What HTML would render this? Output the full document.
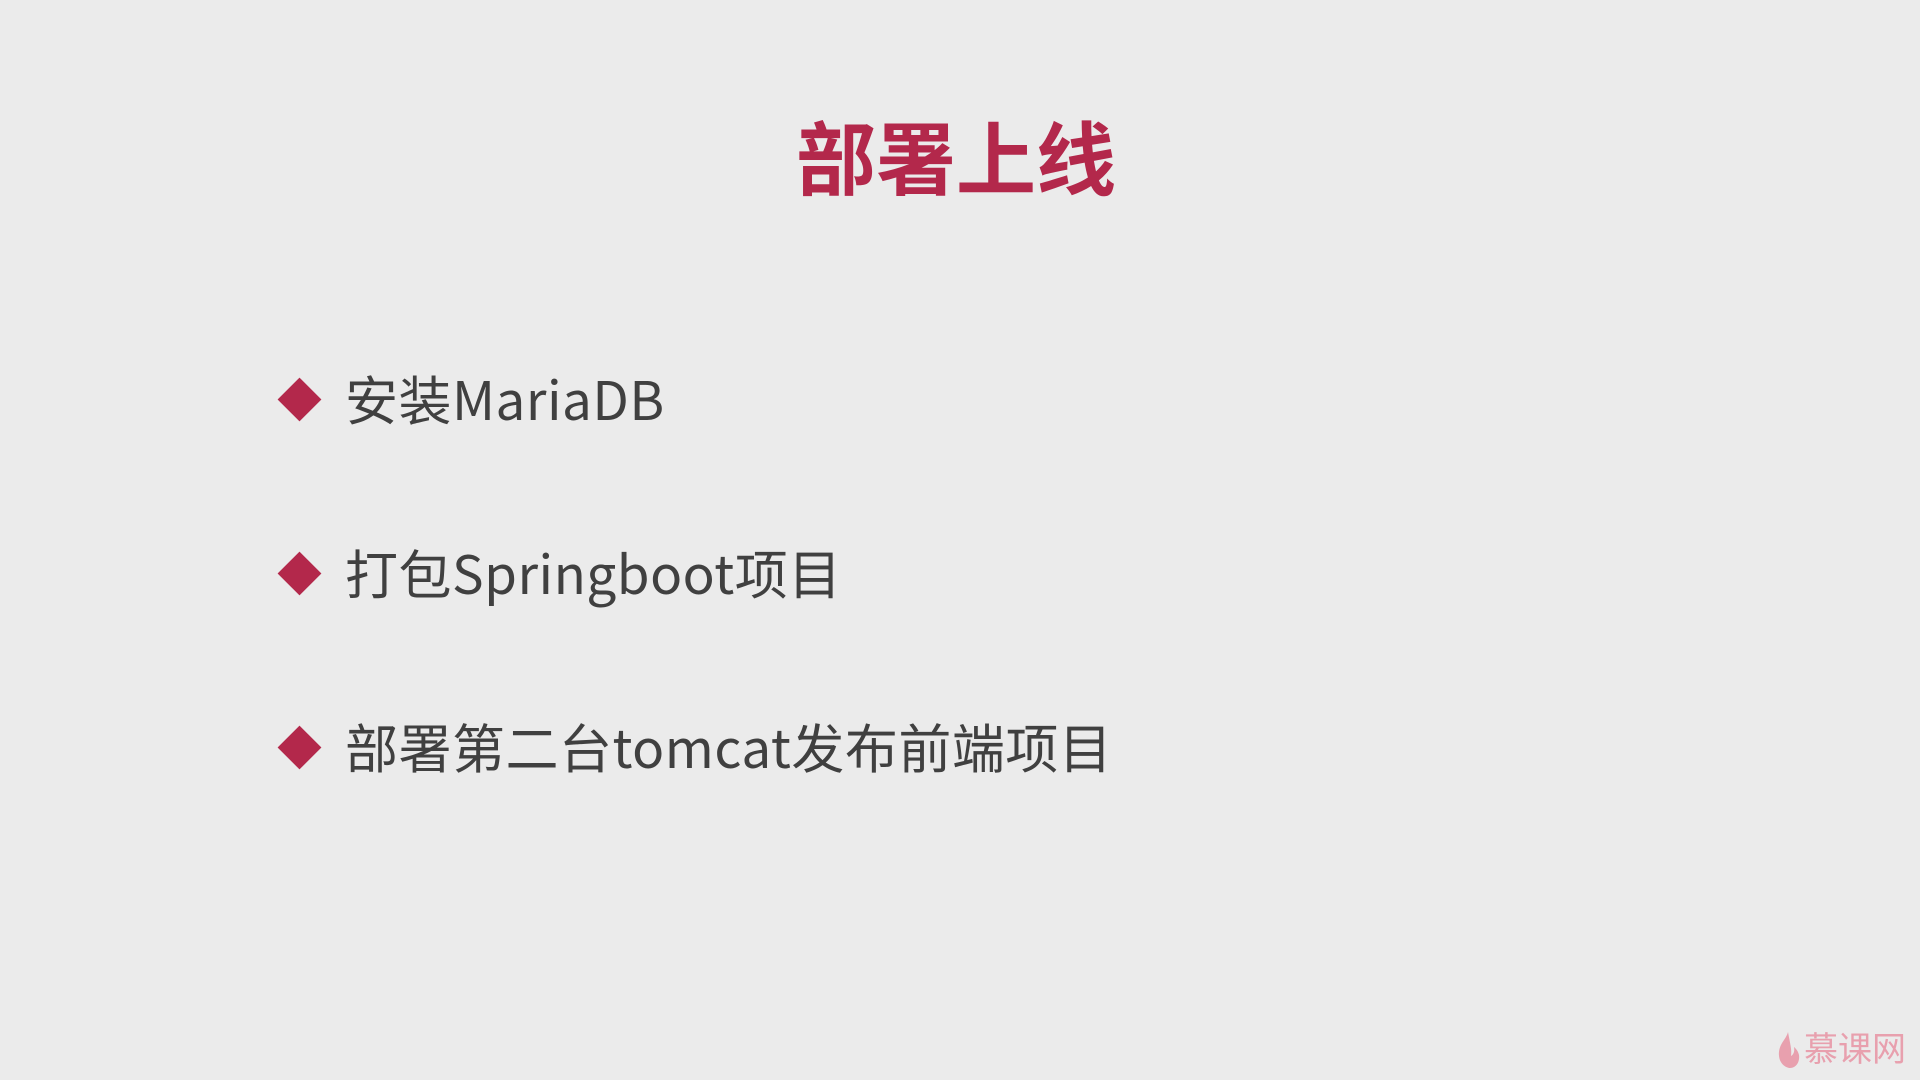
<!DOCTYPE html>
<html><head><meta charset="utf-8"><style>
body{margin:0;width:1920px;height:1080px;background:#ebebeb;position:relative;overflow:hidden;font-family:"Liberation Sans","Noto Sans CJK SC",sans-serif}
.t{position:absolute;left:0;width:1912px;top:114px;text-align:center;font-size:80px;font-weight:bold;color:#b3284b;line-height:96px}
.b{position:absolute;left:345px;font-size:53px;letter-spacing:0.5px;color:#404040;line-height:60px;font-family:"Noto Sans CJK SC",sans-serif}
.d{position:absolute;left:284px;width:31px;height:31px;background:#b3284b;transform:rotate(45deg)}
.w{position:absolute;left:1804px;top:1030px;font-size:34px;color:#e8a0ae;line-height:40px}
</style></head><body>
<div class="t">部署上线</div>
<div class="d" style="top:384px"></div><div class="b" style="top:368px">安装MariaDB</div>
<div class="d" style="top:558px"></div><div class="b" style="top:542px">打包Springboot项目</div>
<div class="d" style="top:732px"></div><div class="b" style="top:716px">部署第二台tomcat发布前端项目</div>
<svg style="position:absolute;left:1776px;top:1030px" width="26" height="40" viewBox="0 0 26 40"><path d="M12 2C10 10 2 14 3 26c1 9 8 12 11 12 6 0 10-6 9-13-1-5-5-8-5-8 1 5-1 8-3 9 1-6-1-13-3-24z" fill="#e8a0ae"/></svg>
<div class="w">慕课网</div>
</body></html>
